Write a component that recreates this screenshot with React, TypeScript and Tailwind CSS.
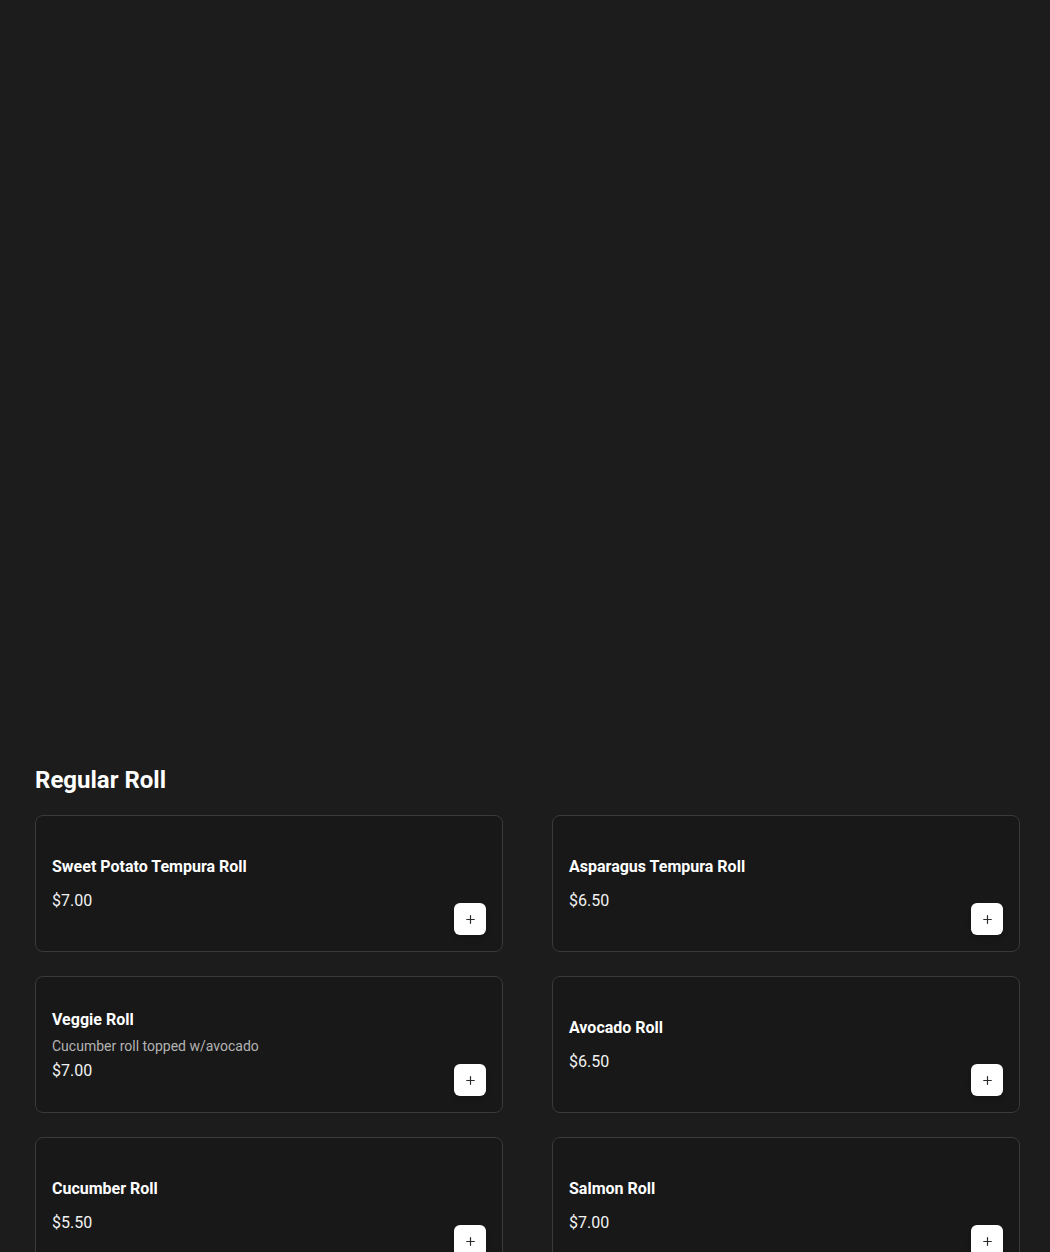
import { Plus } from "lucide-react";

type Item = { name: string; desc?: string; price: string };

const items: Item[] = [
  { name: "Sweet Potato Tempura Roll", price: "$7.00" },
  { name: "Asparagus Tempura Roll", price: "$6.50" },
  { name: "Veggie Roll", desc: "Cucumber roll topped w/avocado", price: "$7.00" },
  { name: "Avocado Roll", price: "$6.50" },
  { name: "Cucumber Roll", price: "$5.50" },
  { name: "Salmon Roll", price: "$7.00" },
];

function MenuCard({ item }: { item: Item }) {
  return (
    <div className="flex h-[137px] items-center justify-between rounded-lg border border-[#3a3a3a] bg-[#181818] p-4">
      <div className="flex flex-col pt-px">
        <h3 className="text-base font-bold leading-6 text-white">{item.name}</h3>
        {item.desc ? (
          <p className="mt-1 text-sm leading-5 text-[#b3b3b3]">{item.desc}</p>
        ) : null}
        <span className={`${item.desc ? "mt-[3px]" : "mt-[10px]"} text-base leading-6 text-[#f2f2f2]`}>
          {item.price}
        </span>
      </div>
      <button className="flex h-8 w-8 items-center justify-center self-end rounded-md bg-white text-[#2b2b2b] shadow-md">
        <Plus size={13} strokeWidth={2.2} />
      </button>
    </div>
  );
}

export default function App() {
  return (
    <div className="min-h-[1252px] bg-[#1c1c1c] font-['Roboto',sans-serif]">
      {/* hero area (image did not load) */}
      <div className="h-[764px]" />
      <section className="pl-[35px] pr-[30px]">
        <h2 className="mb-[19px] text-2xl font-bold leading-8 text-white">Regular Roll</h2>
        <div className="grid grid-cols-2 gap-x-[49px] gap-y-6">
          {items.map((item) => (
            <MenuCard key={item.name} item={item} />
          ))}
        </div>
      </section>
    </div>
  );
}
